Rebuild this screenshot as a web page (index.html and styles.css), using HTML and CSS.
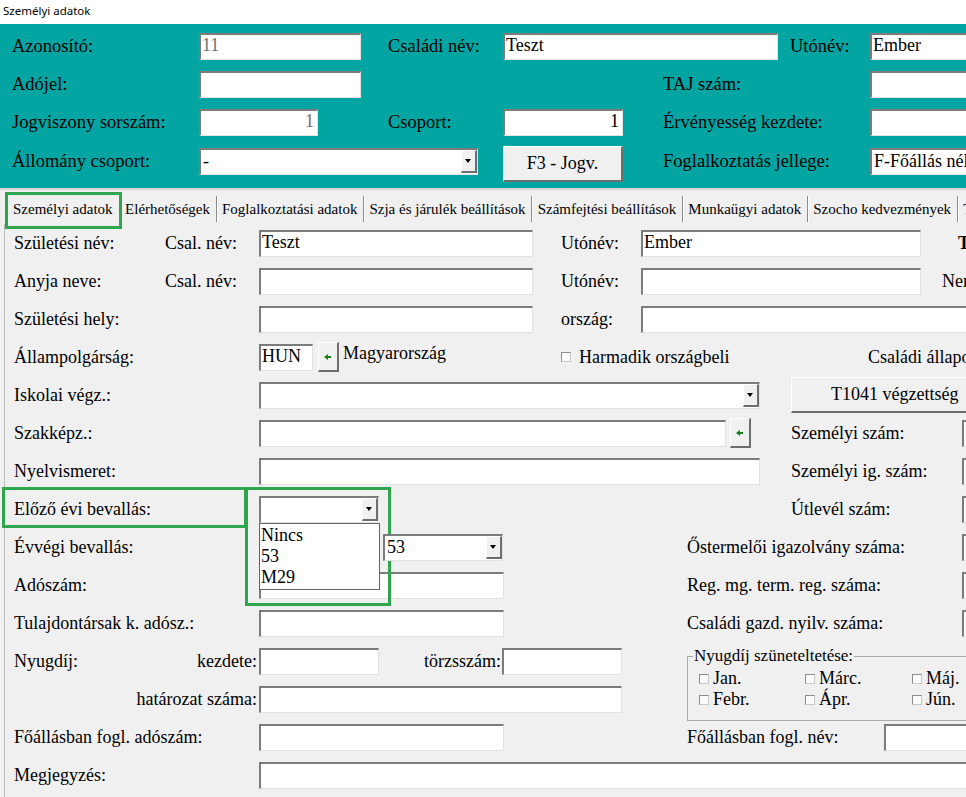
FILE: index.html
```html
<!DOCTYPE html>
<html lang="hu">
<head>
    <meta charset="UTF-8">
    <title>Személyi adatok</title>
    <link rel="stylesheet" href="styles.css">
</head>
<body>
<div class="titlebar">Személyi adatok</div>

<!-- fejléc -->
<div class="head">
    <div class="hrow">
        <label class="h1">Azonosító:</label>
        <input class="fld h2 w162 dis" value="11" readonly>
        <label class="h3">Családi név:</label>
        <input class="fld h4 w275" value="Teszt">
        <label class="h6">Utónév:</label>
        <input class="fld h7 wr" value="Ember">
    </div>
    <div class="hrow">
        <label class="h1">Adójel:</label>
        <input class="fld h2 w162">
        <label class="h5">TAJ szám:</label>
        <input class="fld h7 wr">
    </div>
    <div class="hrow">
        <label class="h1">Jogviszony sorszám:</label>
        <input class="fld h2 w119 num dis" value="1" readonly>
        <label class="h3">Csoport:</label>
        <input class="fld h4 w120 num" value="1">
        <label class="h5">Érvényesség kezdete:</label>
        <input class="fld h7 wr">
    </div>
    <div class="hrow">
        <label class="h1">Állomány csoport:</label>
        <div class="sel h2 w279"><span class="val">-</span><span class="drop"></span></div>
        <button class="btn h4 w120 f3">F3 - Jogv.</button>
        <label class="h5">Foglalkoztatás jellege:</label>
        <div class="sel h7 wr"><span class="val">F-Főállás nélkül</span></div>
    </div>
</div>

<!-- fülek -->
<div class="tabs">
    <span class="tab">Személyi adatok</span>
    <span class="tab">Elérhetőségek</span>
    <span class="tab">Foglalkoztatási adatok</span>
    <span class="tab">Szja és járulék beállítások</span>
    <span class="tab">Számfejtési beállítások</span>
    <span class="tab">Munkaügyi adatok</span>
    <span class="tab">Szocho kedvezmények</span>
    <span class="tab">Tanulmányok</span>
    <div class="mark tabmark"></div>
</div>

<div class="form">
    <div class="row">
        <label class="x1">Születési név:</label>
        <label class="x2">Csal. név:</label>
        <input class="fld x3 w274" value="Teszt">
        <label class="x8">Utónév:</label>
        <input class="fld x9 w280" value="Ember">
        <label class="x16 strong">Törzsszám:</label>
    </div>
    <div class="row">
        <label class="x1">Anyja neve:</label>
        <label class="x2">Csal. név:</label>
        <input class="fld x3 w274">
        <label class="x8">Utónév:</label>
        <input class="fld x9 w280">
        <label class="x15">Nem:</label>
    </div>
    <div class="row">
        <label class="x1">Születési hely:</label>
        <input class="fld x3 w274">
        <label class="x8">ország:</label>
        <input class="fld x9 w340">
    </div>
    <div class="row">
        <label class="x1">Állampolgárság:</label>
        <input class="fld x3 w54" value="HUN">
        <button class="btn pick x4"><svg width="8" height="6" viewBox="0 0 8 6"><polygon points="0,3 4,0 4,2 7,2 7,4 4,4 4,6" fill="#17801c"/></svg></button>
        <label class="x5 up">Magyarország</label>
        <label class="x8 check"><span class="chk"></span>Harmadik országbeli</label>
        <label class="x13">Családi állapot:</label>
    </div>
    <div class="row">
        <label class="x1">Iskolai végz.:</label>
        <div class="sel x3 w501"><span class="val"></span><span class="drop"></span></div>
        <button class="btn x12 big">T1041 végzettség</button>
    </div>
    <div class="row">
        <label class="x1">Szakképz.:</label>
        <input class="fld x3 w467">
        <button class="btn pick x11"><svg width="8" height="6" viewBox="0 0 8 6"><polygon points="0,3 4,0 4,2 7,2 7,4 4,4 4,6" fill="#17801c"/></svg></button>
        <label class="x12">Személyi szám:</label>
        <input class="fld x17 wr">
    </div>
    <div class="row">
        <label class="x1">Nyelvismeret:</label>
        <input class="fld x3 w501">
        <label class="x12">Személyi ig. szám:</label>
        <input class="fld x17 wr">
    </div>
    <div class="row open">
        <label class="x1">Előző évi bevallás:</label>
        <div class="sel x3 w120"><span class="val"></span><span class="drop"></span>
            <ul class="popup">
                <li>Nincs</li>
                <li>53</li>
                <li>M29</li>
            </ul>
        </div>
        <label class="x12">Útlevél szám:</label>
        <input class="fld x17 wr">
        <div class="mark lblmark"></div>
        <div class="mark selmark"></div>
    </div>
    <div class="row">
        <label class="x1">Évvégi bevallás:</label>
        <div class="sel x6 w120"><span class="val">53</span><span class="drop"></span></div>
        <label class="x10">Őstermelői igazolvány száma:</label>
        <input class="fld x17 wr">
    </div>
    <div class="row">
        <label class="x1">Adószám:</label>
        <input class="fld x3 w245">
        <label class="x10">Reg. mg. term. reg. száma:</label>
        <input class="fld x17 wr">
    </div>
    <div class="row">
        <label class="x1">Tulajdontársak k. adósz.:</label>
        <input class="fld x3 w245">
        <label class="x10">Családi gazd. nyilv. száma:</label>
        <input class="fld x17 wr">
    </div>
    <div class="row pair">
        <label class="x1">Nyugdíj:</label>
        <label class="rt-b">kezdete:</label>
        <input class="fld x3 w120">
        <label class="rt-f">törzsszám:</label>
        <input class="fld x7 w120">
        <fieldset class="pause">
            <legend>Nyugdíj szüneteltetése:</legend>
            <div class="months">
                <label class="check"><span class="chk"></span>Jan.</label>
                <label class="check"><span class="chk"></span>Márc.</label>
                <label class="check"><span class="chk"></span>Máj.</label>
                <label class="check"><span class="chk"></span>Febr.</label>
                <label class="check"><span class="chk"></span>Ápr.</label>
                <label class="check"><span class="chk"></span>Jún.</label>
            </div>
        </fieldset>
        <label class="rt-a r2">határozat száma:</label>
        <input class="fld x3 w363 r2">
    </div>
    <div class="row">
        <label class="x1">Főállásban fogl. adószám:</label>
        <input class="fld x3 w245">
        <label class="x10">Főállásban fogl. név:</label>
        <input class="fld x14 wr">
    </div>
    <div class="row">
        <label class="x1">Megjegyzés:</label>
        <input class="fld x3 w720">
    </div>
</div>
</body>
</html>
```

FILE: styles.css
```css
* {
    margin: 0;
    padding: 0;
    box-sizing: border-box;
}
body {
    width: 966px;
    height: 797px;
    overflow: hidden;
    background-color: #f0f0f0;
    font-family: "Liberation Serif", "Times New Roman", serif;
    font-size: 18px;
    color: #000;
}
label {
    white-space: nowrap;
}
.titlebar {
    height: 24px;
    background-color: #fff;
    font-family: "Noto Sans", "Open Sans", sans-serif;
    font-size: 11.5px;
    padding: 3px 0 0 3px;
}

/* fejléc */
.head {
    background-color: #03a5a3;
    padding: 3px 0 9px 12px;
    border-bottom: 2px solid #d6d6d6;
}
.hrow {
    display: grid;
    grid-template-columns: [h1] 187px [h2] 189px [h3] 115px [h4] 160px [h5] 127px [h6] 80px [h7] 200px [hend];
    height: 38px;
    align-items: center;
    font-size: 18.5px;
}
.hrow > * { grid-row: 1; }
.h1 { grid-column-start: h1; }
.h2 { grid-column-start: h2; }
.h3 { grid-column-start: h3; }
.h4 { grid-column-start: h4; }
.h5 { grid-column-start: h5; }
.h6 { grid-column-start: h6; }
.h7 { grid-column-start: h7; }

/* mezők */
.fld {
    display: block;
    height: 27px;
    background-color: #fff;
    border-style: solid;
    border-width: 2px 1px 1px 2px;
    border-color: #7c7c7c #e2e2e2 #e2e2e2 #7c7c7c;
    font: inherit;
    font-size: 18px;
    padding: 0 3px 2px 1px;
    color: #000;
    outline: none;
}
.fld.dis {
    color: #6f6f6f;
}
.fld.num {
    text-align: right;
}
.sel {
    display: flex;
    height: 27px;
    background-color: #fff;
    border-style: solid;
    border-width: 2px 1px 1px 2px;
    border-color: #7c7c7c #e2e2e2 #e2e2e2 #7c7c7c;
    font-size: 18px;
    position: relative;
}
.sel .val {
    flex: 1;
    padding: 0 0 0 2px;
    line-height: 22px;
    white-space: nowrap;
    overflow: hidden;
}
.sel .drop {
    flex: none;
    width: 16px;
    margin: 0 0 1px 0;
    background-color: #f0f0f0;
    border-style: solid;
    border-width: 1px 2px 2px 1px;
    border-color: #fff #6d6d6d #6d6d6d #fff;
    position: relative;
}
.sel .drop::after {
    content: "";
    position: absolute;
    left: 3px;
    top: 8px;
    border-left: 3.5px solid transparent;
    border-right: 3.5px solid transparent;
    border-top: 4px solid #000;
}
.btn {
    display: block;
    background-color: #f0f0f0;
    border-style: solid;
    border-width: 1px 2px 2px 1px;
    border-color: #fff #6d6d6d #6d6d6d #fff;
    font: inherit;
    color: #000;
}
.f3 {
    height: 36px;
    align-self: start;
    margin-top: 5px;
    font-size: 18px;
}
.big {
    width: 200px;
    height: 36px;
    text-align: left;
    padding-left: 39px;
}
.pick {
    width: 21px;
    height: 30px;
    display: flex;
    align-items: center;
    justify-content: center;
}
.w54 { width: 54px; }
.w119 { width: 119px; }
.w120 { width: 120px; }
.w162 { width: 162px; }
.w245 { width: 245px; }
.w274 { width: 274px; }
.w275 { width: 275px; }
.w279 { width: 279px; }
.w280 { width: 280px; }
.w340 { width: 340px; }
.w363 { width: 363px; }
.w467 { width: 467px; }
.w501 { width: 501px; }
.w720 { width: 720px; }
.wr { width: 110px; }

/* fülek */
.tabs {
    display: flex;
    height: 34px;
    align-items: center;
    padding: 3px 0 0 8px;
    font-size: 15px;
    white-space: nowrap;
    position: relative;
}
.tab {
    padding: 0 5.5px 0 4.5px;
    line-height: 26px;
    border-right: 1px solid #8a8a8a;
    box-shadow: 1px 0 0 #fff;
    margin-right: 1px;
}
.tab:first-child {
    padding-left: 5px;
    padding-right: 6px;
}
.mark {
    position: absolute;
    border: 3px solid #2fa64d;
}
.tabmark {
    left: 5px;
    top: 2px;
    width: 117px;
    height: 37px;
}

/* adatlap */
.form {
    margin-left: 4px;
    border-left: 1px solid #bdbdbd;
    height: 573px;
}
.row {
    display: grid;
    grid-template-columns: [l1] 151px [l2] 94px [l3] 59px [l4] 25px [l5] 40px [l6] 119px [l7] 59px [l8] 80px [l9] 46px [l10] 43px [l11] 61px [l12] 77px [l13] 16px [l14] 58px [l15] 16px [l16] 4px [l17] 200px [lend];
    height: 38px;
    align-items: center;
    padding-left: 9px;
}
.row > * { grid-row: 1; }
.x1 { grid-column-start: l1; }
.x2 { grid-column-start: l2; }
.x3 { grid-column-start: l3; }
.x4 { grid-column-start: l4; }
.x5 { grid-column-start: l5; }
.x6 { grid-column-start: l6; }
.x7 { grid-column-start: l7; }
.x8 { grid-column-start: l8; }
.x9 { grid-column-start: l9; }
.x10 { grid-column-start: l10; }
.x11 { grid-column-start: l11; }
.x12 { grid-column-start: l12; }
.x13 { grid-column-start: l13; }
.x14 { grid-column-start: l14; }
.x15 { grid-column-start: l15; }
.x16 { grid-column-start: l16; }
.x17 { grid-column-start: l17; }
.rt-a { grid-column: l1 / l3; justify-self: end; padding-right: 2px; }
.rt-b { grid-column: l2 / l3; justify-self: end; padding-right: 2px; }
.rt-f { grid-column: l6 / l7; justify-self: end; padding-right: 1px; }
.strong {
    font-weight: bold;
}
.up {
    align-self: start;
    margin-top: 5px;
}
.check {
    display: flex;
    align-items: center;
}
.chk {
    flex: none;
    width: 10px;
    height: 10px;
    margin-right: 8px;
    background-color: #fbfbfb;
    border: 1px solid;
    border-color: #8c8c8c #c8c8c8 #c8c8c8 #8c8c8c;
}

/* lenyíló lista */
.open {
    position: relative;
}
.popup {
    position: absolute;
    left: -2px;
    top: 25px;
    width: 121px;
    height: 67px;
    list-style: none;
    background-color: #fff;
    border: 1px solid #646464;
    padding: 1px 0 0 1px;
    line-height: 21px;
    z-index: 5;
}
.lblmark {
    left: -3px;
    top: -3px;
    width: 245px;
    height: 41px;
}
.selmark {
    left: 240px;
    top: -3px;
    width: 146px;
    height: 119px;
}

/* nyugdíj */
.pair {
    height: 76px;
    grid-template-rows: 38px 38px;
}
.pair > .r2 { grid-row: 2; }
.pause {
    grid-column-start: l10;
    grid-row: 1 / 3;
    align-self: start;
    margin-top: 4px;
    width: 300px;
    height: 75px;
    border: 1px solid #a9a9a9;
    padding: 0 0 0 5px;
}
.pause legend {
    font-size: 17px;
    line-height: 20px;
    padding: 0 1px;
}
.months {
    display: grid;
    grid-template-columns: 106px 107px 100px;
    grid-auto-rows: 21px;
    margin-top: 2px;
    padding-left: 6px;
}
.months .chk {
    margin-right: 4px;
}
```
